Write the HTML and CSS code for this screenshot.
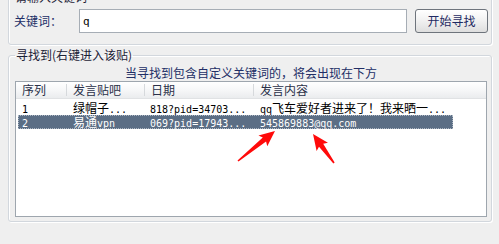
FILE: index.html
```html
<!DOCTYPE html>
<html lang="zh-CN">
<head>
<meta charset="utf-8">
<title>关键词寻找</title>
<link rel="stylesheet" href="styles.css">
</head>
<body>
<div class="page">
  <fieldset class="box box-search">
    <legend class="legend">请输入关键词</legend>
    <div class="search-row">
      <label class="kw-label" for="kw">关键词：</label>
      <input class="kw-input" id="kw" value="q">
      <button class="btn">开始寻找</button>
    </div>
  </fieldset>
  <fieldset class="box box-result">
    <legend class="legend">寻找到(右键进入该贴)</legend>
    <div class="hint">当寻找到包含自定义关键词的，将会出现在下方</div>
    <div class="list">
      <div class="list-head">
        <div class="hcol c1">序列</div>
        <div class="hcol c2">发言贴吧</div>
        <div class="hcol c3">日期</div>
        <div class="hcol c4">发言内容</div>
      </div>
      <div class="row">
        <div class="cell c1"><span class="m">1</span></div>
        <div class="cell c2">绿帽子<span class="m">...</span></div>
        <div class="cell c3"><span class="m">818?pid=34703...</span></div>
        <div class="cell c4"><span class="m">qq</span>飞车爱好者进来了！我来晒一<span class="m">...</span></div>
      </div>
      <div class="row selected">
        <div class="cell c1"><span class="m">2</span></div>
        <div class="cell c2">易通<span class="m">vpn</span></div>
        <div class="cell c3"><span class="m">069?pid=17943...</span></div>
        <div class="cell c4"><span class="m">545869883@qq.com</span></div>
      </div>
    </div>
  </fieldset>
</div>
<svg class="arrows" width="499" height="244" viewBox="0 0 499 244">
  <g transform="translate(238 161) rotate(-39)">
    <polygon points="0,-0.8 34,-2.6 32,-7 47.6,0 32,7 34,2.6 0,0.8" fill="#ff0a0a"/>
  </g>
  <g transform="translate(334 163) rotate(-125.9)">
    <polygon points="0,-0.8 22,-2.6 20,-7 35.8,0 20,7 22,2.6 0,0.8" fill="#ff0a0a"/>
  </g>
</svg>
</body>
</html>
```

FILE: styles.css
```css
html, body {
  margin: 0;
  padding: 0;
  background: #efefef;
  overflow: hidden;
}

body {
  width: 499px;
  height: 244px;
  position: relative;
  font-family: "Noto Sans CJK SC", "Liberation Sans", sans-serif;
  font-size: 12px;
  color: #000;
}

.page {
  padding-left: 8px;
  width: 484px;
}

.box {
  margin: 0;
  min-width: 0;
  border: 1px solid #d2d7dd;
  border-radius: 3px;
  box-shadow: 1px 1px 0 #fff, inset 1px 1px 0 #fff;
}

.legend {
  padding: 0 1px;
  margin: 0;
  font-size: 12px;
  line-height: 14px;
  height: 14px;
  color: #1c2236;
}

.box-search {
  margin-top: -10px;
  padding: 5px 3px 11px 5px;
}

.search-row {
  display: flex;
  align-items: center;
  height: 24px;
}

.kw-label {
  width: 65px;
  color: #222e66;
  font-size: 12px;
  line-height: 14px;
}

.kw-input {
  box-sizing: border-box;
  width: 328px;
  height: 24px;
  margin: 0 8px 0 0;
  padding: 0 0 0 3px;
  border: 1px solid #a6adb5;
  background: #fff;
  font-family: "DejaVu Sans Mono", monospace;
  font-size: 11px;
  color: #000;
  outline: none;
}

.btn {
  box-sizing: border-box;
  width: 73px;
  height: 24px;
  margin: 0;
  padding: 0;
  border: 1px solid #6e747c;
  border-radius: 3px;
  background: linear-gradient(#ffffff, #f2f2f2 45%, #dedede);
  font-family: "Noto Sans CJK SC", sans-serif;
  font-size: 12px;
  line-height: 14px;
  color: #1e2a62;
}

.box-result {
  margin-top: 3px;
  padding: 4px 4px 4px 6px;
}

.hint {
  height: 14px;
  line-height: 14px;
  text-align: center;
  color: #222e66;
  margin-bottom: 1px;
}

.list {
  box-sizing: border-box;
  height: 136px;
  border: 1px solid #9ea6ae;
  background: #fff;
}

.list-head {
  display: flex;
  height: 16px;
  background: linear-gradient(#ffffff, #f6f7f8 50%, #eaecee);
  border-bottom: 1px solid #e0e2e4;
}

.hcol {
  box-sizing: border-box;
  padding-left: 6px;
  color: #2a3048;
  border-right: 1px solid #d6d9dc;
  margin: 2px 0;
  line-height: 12px;
}

.list-head .c1 { width: 51px; }
.list-head .c2 { width: 78px; }
.list-head .c3 { width: 109px; }
.list-head .c4 { width: 199px; border-right: none; }

.row {
  display: flex;
  height: 14px;
  line-height: 14px;
  margin-left: 2px;
  width: 435px;
}

.list-head + .row {
  margin-top: 2px;
}

.cell {
  box-sizing: border-box;
  white-space: nowrap;
}

.row .c1 { width: 49px; padding-left: 4px; }
.row .c2 { width: 78px; padding-left: 6px; }
.row .c3 { width: 109px; padding-left: 5px; }
.row .c4 { width: 199px; padding-left: 6px; }

.m {
  font-family: "DejaVu Sans Mono", "Liberation Mono", monospace;
  font-size: 10px;
}

.selected {
  background: #5b6e85;
  color: #fff;
  outline: 1px dotted #aeb8c4;
  outline-offset: -1px;
}

.arrows {
  position: absolute;
  left: 0;
  top: 0;
  pointer-events: none;
}
```
